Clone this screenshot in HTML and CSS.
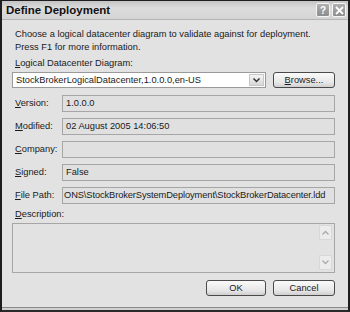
FILE: index.html
```html
<!DOCTYPE html>
<html lang="en">
<head>
    <meta charset="UTF-8">
    <meta name="viewport" content="width=device-width, initial-scale=1.0">
    <title>Define Deployment</title>
    <link rel="stylesheet" href="styles.css">
</head>
<body>
    <div class="dialog">
        <!-- Title bar -->
        <div class="titlebar">
            <span class="title">Define Deployment</span>
            <div class="caption-buttons">
                <span class="cap-btn">?</span>
                <span class="cap-btn">
                    <svg width="9" height="9" viewBox="0 0 9 9"><path d="M1 1 L8 8 M8 1 L1 8" stroke="#fff" stroke-width="1.8"/></svg>
                </span>
            </div>
        </div>

        <div class="content">
            <p class="intro">Choose a logical datacenter diagram to validate against for deployment.<br>Press F1 for more information.</p>

            <div class="label-line"><u>L</u>ogical Datacenter Diagram:</div>
            <div class="combo-row">
                <div class="combo">
                    <span class="combo-text">StockBrokerLogicalDatacenter,1.0.0.0,en-US</span>
                    <span class="combo-drop">
                        <svg width="7" height="5" viewBox="0 0 7 5"><path d="M0.5 0.5 L3.5 3.5 L6.5 0.5" fill="none" stroke="#333" stroke-width="1.5"/></svg>
                    </span>
                </div>
                <button class="btn"><u>B</u>rowse...</button>
            </div>

            <!-- Properties -->
            <div class="props">
                <span class="prop-label"><u>V</u>ersion:</span>
                <div class="prop-field">1.0.0.0</div>
                <span class="prop-label"><u>M</u>odified:</span>
                <div class="prop-field">02 August 2005 14:06:50</div>
                <span class="prop-label"><u>C</u>ompany:</span>
                <div class="prop-field"></div>
                <span class="prop-label"><u>S</u>igned:</span>
                <div class="prop-field">False</div>
                <span class="prop-label"><u>F</u>ile Path:</span>
                <div class="prop-field path">ONS\StockBrokerSystemDeployment\StockBrokerDatacenter.ldd</div>
            </div>

            <div class="label-line desc-label"><u>D</u>escription:</div>
            <div class="textarea">
                <div class="scrollbar">
                    <span class="scroll-btn">
                        <svg width="7" height="5" viewBox="0 0 7 5"><path d="M0.5 4.5 L3.5 1.5 L6.5 4.5" fill="none" stroke="#aaa" stroke-width="1.3"/></svg>
                    </span>
                    <span class="scroll-btn">
                        <svg width="7" height="5" viewBox="0 0 7 5"><path d="M0.5 0.5 L3.5 3.5 L6.5 0.5" fill="none" stroke="#aaa" stroke-width="1.3"/></svg>
                    </span>
                </div>
            </div>

            <div class="actions">
                <button class="btn">OK</button>
                <button class="btn">Cancel</button>
            </div>
        </div>
    </div>
</body>
</html>
```

FILE: styles.css
```css
body {
    margin: 0;
    background-color: #e2e2e2;
}
.dialog {
    width: 350px;
    height: 312px;
    box-sizing: border-box;
    border-top: 1px solid #1e1e1e;
    border-left: 2px solid #1e1e1e;
    border-right: 2px solid #1e1e1e;
    border-bottom: 2px solid #2a2a2a;
    box-shadow: inset 0 -2px 0 #d0d0d0, inset 0 -3px 0 #8a8a8a;
    background-color: #e2e2e2;
    font-family: "Liberation Sans", Arial, sans-serif;
    font-size: 9.3px;
    color: #1a1a1a;
    display: flex;
    flex-direction: column;
}
.titlebar {
    height: 18px;
    display: flex;
    align-items: center;
    justify-content: space-between;
    padding: 0 2px 0 4px;
    background: linear-gradient(#c4c4c4, #dcdcdc 40%, #d4d4d4);
    border-bottom: 1px solid #b4b4b4;
}
.title {
    font-weight: bold;
    font-size: 11.5px;
    color: #111;
}
.caption-buttons {
    display: flex;
    gap: 2px;
}
.cap-btn {
    width: 12px;
    height: 12px;
    border: 1px solid #f4f4f4;
    border-radius: 2px;
    background: linear-gradient(#b0b0b0, #8c8c8c);
    color: #fff;
    font-weight: bold;
    font-size: 10px;
    display: flex;
    align-items: center;
    justify-content: center;
}
.content {
    flex: 1;
    display: flex;
    flex-direction: column;
    padding: 0 13px 0 10px;
}
.intro {
    margin: 8px 0 0 3px;
    line-height: 13px;
}
.label-line {
    margin: 3px 0 0 3px;
    line-height: 13px;
}
.combo-row {
    display: flex;
    gap: 7px;
    margin-top: 2px;
    height: 16px;
}
.combo {
    flex: 1;
    display: flex;
    background-color: #fff;
    border: 1px solid #9a9a9a;
}
.combo-text {
    flex: 1;
    padding-left: 3px;
    line-height: 14px;
    white-space: nowrap;
    overflow: hidden;
}
.combo-drop {
    width: 13px;
    margin: 1px;
    border: 1px solid #c8c8c8;
    background: linear-gradient(#f4f4f4, #d8d8d8);
    display: flex;
    align-items: center;
    justify-content: center;
}
.btn {
    font-family: inherit;
    font-size: 9.3px;
    color: #1a1a1a;
    width: 62px;
    height: 16px;
    padding: 0;
    border: 1px solid #4a4a4a;
    border-radius: 3px;
    background: linear-gradient(#fafafa, #e6e6e6 70%, #cfcfcf);
}
.props {
    display: grid;
    grid-template-columns: 50px 1fr;
    grid-auto-rows: 17px;
    row-gap: 6px;
    margin-top: 7px;
}
.prop-label {
    padding-left: 3px;
    line-height: 17px;
}
.prop-field {
    border: 1px solid #a6a6a6;
    background-color: #e0e0e0;
    padding-left: 3px;
    line-height: 15px;
    white-space: nowrap;
    overflow: hidden;
}
.prop-field.path {
    padding-left: 1px;
    letter-spacing: -0.1px;
}
.desc-label {
    margin-top: 4px;
}
.textarea {
    height: 48px;
    margin-top: 2px;
    border: 1px solid #a6a6a6;
    display: flex;
    justify-content: flex-end;
}
.scrollbar {
    width: 13px;
    margin: 1px 2px 2px 0;
    display: flex;
    flex-direction: column;
    justify-content: space-between;
}
.scroll-btn {
    height: 13px;
    border: 1px solid #d8d8d8;
    background-color: #ececec;
    display: flex;
    align-items: center;
    justify-content: center;
}
.actions {
    display: flex;
    justify-content: flex-end;
    gap: 7px;
    margin-top: 7px;
}
.actions .btn:first-child {
    width: 60px;
}
```
